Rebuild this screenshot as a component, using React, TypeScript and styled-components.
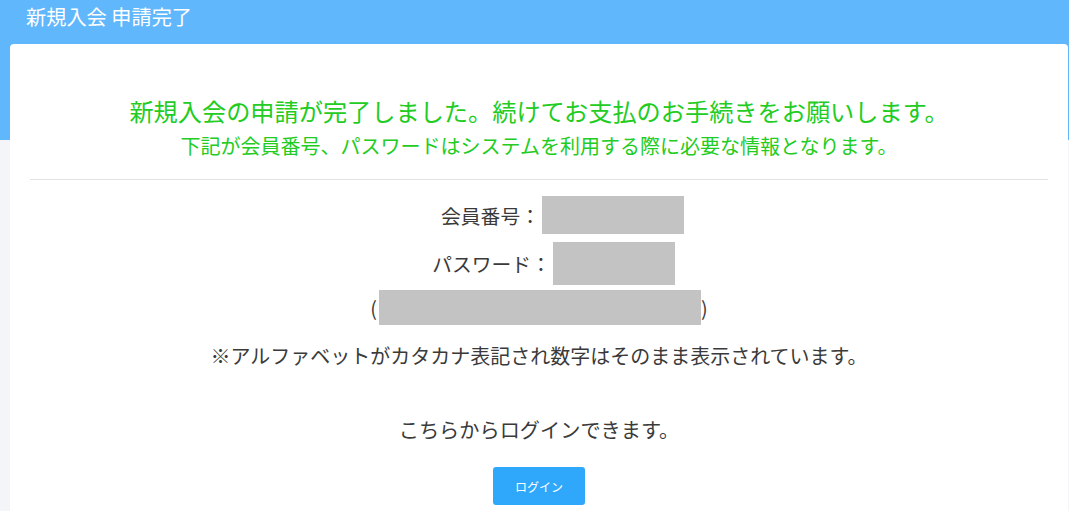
import React from 'react';
import styled, { createGlobalStyle } from 'styled-components';

const GlobalStyle = createGlobalStyle`
  html, body {
    margin: 0;
    padding: 0;
    background: #f3f5f9;
  }
  body {
    font-family: "Noto Sans CJK JP", "Noto Sans", sans-serif;
    color: #3a3a3a;
  }
`;

const Page = styled.div`
  min-height: 100vh;
  background: linear-gradient(to bottom, #61b7fc 0, #61b7fc 140px, #f3f5f9 140px);
`;

const TitleBar = styled.header`
  height: 44px;
  box-sizing: border-box;
  padding: 4px 0 0 26px;
  color: #fff;
  font-size: 20.2px;
  line-height: 26px;
`;

const Card = styled.main`
  margin: 0 1px 0 10px;
  padding: 0 20px 40px;
  background: #fff;
  border-radius: 4px 4px 0 0;
  text-align: center;
`;

const Lead = styled.h1`
  margin: 0;
  padding-top: 50px;
  font-weight: normal;
  font-size: 24.2px;
  line-height: 34px;
  color: #22cc22;
`;

const SubLead = styled.p`
  margin: 4px 0 0;
  font-size: 20px;
  line-height: 28px;
  color: #22cc22;
`;

const Rule = styled.hr`
  margin: 19px 0 0;
  border: 0;
  border-top: 1px solid #e3e3e3;
`;

const InfoList = styled.div`
  display: flex;
  flex-direction: column;
  gap: 8px;
  margin-top: 16px;
`;

const InfoRow = styled.div<{ $tight?: boolean }>`
  display: flex;
  justify-content: center;
  align-items: center;
  font-size: 19.8px;
  margin-top: ${(p) => (p.$tight ? '-3px' : '0')};
`;

const Label = styled.span`
  white-space: nowrap;
`;

const Masked = styled.span<{ $w: number; $h: number; $over?: number }>`
  display: inline-block;
  width: ${(p) => p.$w}px;
  height: ${(p) => p.$h}px;
  margin-right: ${(p) => -(p.$over || 0)}px;
  margin-left: 2px;
  background: #c3c3c3;
`;

const Note = styled.p`
  margin: 16px 0 0;
  font-size: 20px;
  line-height: 30px;
`;

const LoginText = styled.p`
  margin: 44px 0 0;
  font-size: 20.2px;
  line-height: 30px;
`;

const LoginButton = styled.button`
  display: block;
  margin: 22px auto 0;
  width: 92px;
  height: 38px;
  border: 0;
  border-radius: 3px;
  background: #2fa8fc;
  color: #fff;
  font-family: inherit;
  font-size: 12px;
  cursor: pointer;
`;

export default function App() {
  return (
    <>
      <GlobalStyle />
      <Page>
        <TitleBar>新規入会 申請完了</TitleBar>
        <Card>
          <Lead>新規入会の申請が完了しました。続けてお支払のお手続きをお願いします。</Lead>
          <SubLead>下記が会員番号、パスワードはシステムを利用する際に必要な情報となります。</SubLead>
          <Rule />
          <InfoList>
            <InfoRow>
              <Label>会員番号：</Label>
              <Masked $w={142} $h={38} $over={47} />
            </InfoRow>
            <InfoRow>
              <Label>パスワード：</Label>
              <Masked $w={122} $h={43} $over={29} />
            </InfoRow>
            <InfoRow $tight>
              <Label>(</Label>
              <Masked $w={322} $h={35} />
              <Label>)</Label>
            </InfoRow>
          </InfoList>
          <Note>※アルファベットがカタカナ表記され数字はそのまま表示されています。</Note>
          <LoginText>こちらからログインできます。</LoginText>
          <LoginButton type="button">ログイン</LoginButton>
        </Card>
      </Page>
    </>
  );
}
